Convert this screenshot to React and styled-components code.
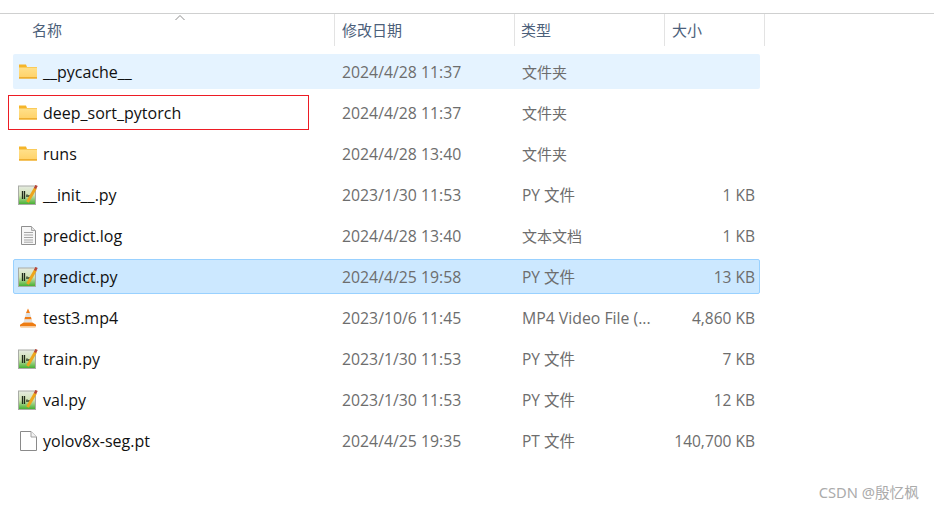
import React from "react";
import styled, { createGlobalStyle } from "styled-components";

const Global = createGlobalStyle`
  html, body { margin: 0; padding: 0; background: #fff; }
  body { font-family: "Open Sans", "Noto Sans CJK SC", sans-serif; }
`;

const COLUMNS = "321px 180px 150px 96px";

const Page = styled.div`
  position: relative;
  width: 934px;
  height: 507px;
  padding: 13px 0 0;
  box-sizing: border-box;
  overflow: hidden;
`;

const Header = styled.div`
  position: relative;
  display: grid;
  grid-template-columns: 322px 180px 150px 100px;
  height: 33px;
  padding-left: 13px;
  border-top: 1px solid #cfd0d0;
  box-sizing: border-box;
`;

const HeaderCell = styled.div`
  display: flex;
  align-items: center;
  height: 32px;
  padding-left: ${(p) => p.$pad}px;
  padding-bottom: 2px;
  font-family: "Noto Sans CJK SC", sans-serif;
  font-size: 15px;
  color: #4c607a;
  border-right: 1px solid #e3e3e3;
  box-sizing: border-box;
`;

const SortCaret = styled.svg`
  position: absolute;
  left: 174px;
  top: 0;
  width: 12px;
  height: 7px;
`;

const List = styled.div`
  display: flex;
  flex-direction: column;
  gap: 6px;
  margin: 8px 0 0 13px;
  width: 747px;
`;

const Row = styled.div`
  position: relative;
  display: grid;
  grid-template-columns: ${COLUMNS};
  align-items: center;
  height: 35px;
  box-sizing: border-box;
  border-radius: 2px;
  background: ${(p) => (p.$state === "selected" ? "#cce8ff" : p.$state === "hover" ? "#e5f3ff" : "transparent")};
  border: ${(p) => (p.$state === "selected" ? "1px solid #99d1ff" : "1px solid transparent")};
`;

const NameCell = styled.div`
  display: flex;
  align-items: center;
  height: 100%;
  padding-left: 4px;
  font-size: 16px;
  color: #111;
  white-space: nowrap;
`;

const IconSlot = styled.span`
  display: flex;
  justify-content: center;
  width: 20px;
  margin-right: 5px;
`;

const MetaCell = styled.div`
  padding-left: ${(p) => p.$pad || 7}px;
  padding-right: ${(p) => p.$right || 0}px;
  font-size: ${(p) => p.$size || 15.8}px;
  color: #6d6d6d;
  white-space: nowrap;
  text-align: ${(p) => (p.$end ? "right" : "left")};
`;

const Callout = styled.div`
  position: absolute;
  left: -6px;
  top: -1px;
  width: 301px;
  height: 35px;
  box-sizing: border-box;
  border: 1px solid #ed1c24;
`;

const Watermark = styled.div`
  position: absolute;
  right: 15px;
  top: 481px;
  font-family: "Noto Sans", "Noto Sans CJK SC", sans-serif;
  font-size: 14.7px;
  color: #ababab;
`;

const FolderIcon = () => (
  <svg width="18" height="15" viewBox="0 0 18 15">
    <defs>
      <linearGradient id="fold" x1="0" y1="0" x2="0" y2="1">
        <stop offset="0" stopColor="#ffe08a" />
        <stop offset="1" stopColor="#ffd36b" />
      </linearGradient>
    </defs>
    <path d="M0 0.5 H7 L8 3 H18 V14.5 H0 Z" fill="#f5b52a" />
    <rect x="0" y="3.5" width="18" height="9.5" fill="url(#fold)" />
    <rect x="0" y="13" width="18" height="1.5" fill="#eeae30" />
  </svg>
);

const PyIcon = ({ id }) => (
  <svg width="20" height="20" viewBox="0 0 20 20">
    <defs>
      <linearGradient id={id} x1="0" y1="0" x2="0" y2="1">
        <stop offset="0" stopColor="#e6ebe2" />
        <stop offset="0.5" stopColor="#cfe2b2" />
        <stop offset="1" stopColor="#3fae2c" />
      </linearGradient>
    </defs>
    <rect x="0.5" y="1" width="17" height="18.5" fill={`url(#${id})`} stroke="#a9aca6" />
    <path d="M4.5 6 V14 M6.5 6 V14 M9 9.5 V12 M11 10 V12" stroke="#1f2a1a" strokeWidth="1.3" />
    <path d="M9.5 17 L17.5 3" stroke="#eda51c" strokeWidth="3" />
    <path d="M17 3.5 L18.6 0.5" stroke="#b6463a" strokeWidth="2.6" />
  </svg>
);

const LogIcon = () => (
  <svg width="15" height="19" viewBox="0 0 15 19">
    <path d="M0.5 0.5 H10.5 L14.5 4.5 V18.5 H0.5 Z" fill="#f7f7f7" stroke="#8f8f8f" />
    <path d="M10.5 0.5 V4.5 H14.5" fill="#e2e2e2" stroke="#a8a8a8" />
    <path d="M3 6.5 H12 M3 9 H12 M3 11.5 H12 M3 14 H12 M3 16.2 H12" stroke="#a5a5a5" />
  </svg>
);

const ConeIcon = () => (
  <svg width="16" height="20" viewBox="0 0 16 20">
    <path d="M8 0.5 L10 5 H6 Z" fill="#f2801a" />
    <path d="M6 5 H10 L11 9 H5 Z" fill="#dedede" />
    <path d="M5 9 H11 L11.7 11.5 H4.3 Z" fill="#f07d16" />
    <path d="M4.3 11.5 H11.7 L12.4 14.5 H3.6 Z" fill="#e2e2e2" />
    <path d="M3.6 14.5 H12.4 L16 16.8 V18.5 H0 V16.8 Z" fill="#ee7c12" />
    <rect x="0.5" y="18.5" width="15" height="1.5" fill="#f8d9b6" />
  </svg>
);

const BlankIcon = () => (
  <svg width="17" height="20" viewBox="0 0 17 20">
    <path d="M0.5 0.5 H11 L16.5 6 V19.5 H0.5 Z" fill="#fff" stroke="#8a8a8a" />
    <path d="M11 0.5 V6 H16.5" fill="#f3f3f3" stroke="#a2a2a2" />
  </svg>
);

const ICONS = {
  folder: () => <FolderIcon />,
  py: (i) => <PyIcon id={`py${i}`} />,
  log: () => <LogIcon />,
  cone: () => <ConeIcon />,
  blank: () => <BlankIcon />,
};

const files = [
  { name: "__pycache__", date: "2024/4/28 11:37", type: "文件夹", size: "", icon: "folder", state: "hover" },
  { name: "deep_sort_pytorch", date: "2024/4/28 11:37", type: "文件夹", size: "", icon: "folder", callout: true },
  { name: "runs", date: "2024/4/28 13:40", type: "文件夹", size: "", icon: "folder" },
  { name: "__init__.py", date: "2023/1/30 11:53", type: "PY 文件", typeSize: 15.5, size: "1 KB", icon: "py" },
  { name: "predict.log", date: "2024/4/28 13:40", type: "文本文档", size: "1 KB", icon: "log" },
  { name: "predict.py", date: "2024/4/25 19:58", type: "PY 文件", typeSize: 15.5, size: "13 KB", icon: "py", state: "selected" },
  { name: "test3.mp4", date: "2023/10/6 11:45", type: "MP4 Video File (...", typeSize: 15.8, size: "4,860 KB", icon: "cone" },
  { name: "train.py", date: "2023/1/30 11:53", type: "PY 文件", typeSize: 15.5, size: "7 KB", icon: "py" },
  { name: "val.py", date: "2023/1/30 11:53", type: "PY 文件", typeSize: 15.5, size: "12 KB", icon: "py" },
  { name: "yolov8x-seg.pt", date: "2024/4/25 19:35", type: "PT 文件", typeSize: 15.5, size: "140,700 KB", icon: "blank" },
];

export default function App() {
  return (
    <Page>
      <Global />
      <Header>
        <HeaderCell $pad={19}>名称</HeaderCell>
        <HeaderCell $pad={7}>修改日期</HeaderCell>
        <HeaderCell $pad={6}>类型</HeaderCell>
        <HeaderCell $pad={7}>大小</HeaderCell>
        <SortCaret viewBox="0 0 12 7">
          <path d="M1.5 6 L6 1.5 L10.5 6" fill="none" stroke="#8f8f8f" />
        </SortCaret>
      </Header>
      <List>
        {files.map((f, i) => (
          <Row key={f.name} $state={f.state}>
            <NameCell>
              <IconSlot>{ICONS[f.icon](i)}</IconSlot>
              {f.name}
            </NameCell>
            <MetaCell>{f.date}</MetaCell>
            <MetaCell $size={f.typeSize || 15}>{f.type}</MetaCell>
            <MetaCell $end $right={6} $size={15.5}>{f.size}</MetaCell>
            {f.callout && <Callout />}
          </Row>
        ))}
      </List>
      <Watermark>CSDN @殷忆枫</Watermark>
    </Page>
  );
}
